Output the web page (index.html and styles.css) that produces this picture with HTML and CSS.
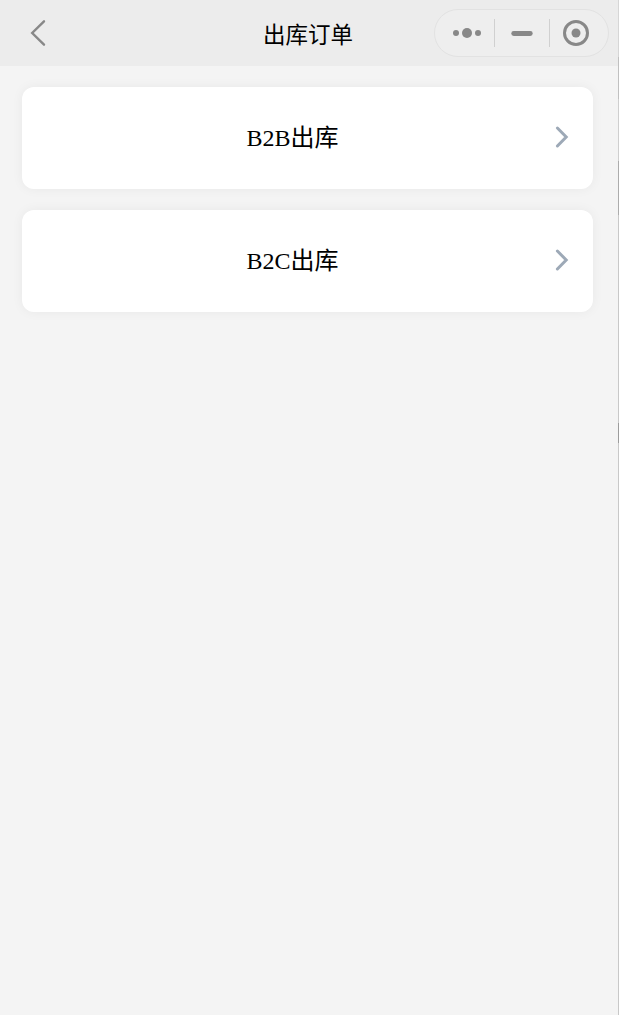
FILE: index.html
```html
<!DOCTYPE html>
<html lang="zh-CN">
<head>
    <meta charset="UTF-8">
    <meta name="viewport" content="width=device-width, initial-scale=1.0">
    <title>出库订单</title>
    <link rel="stylesheet" href="styles.css">
</head>
<body>
    <!-- Navigation bar -->
    <header class="navbar">
        <a class="back" href="#" aria-label="返回">
            <svg width="18" height="28" viewBox="0 0 18 28">
                <path d="M15 2.3 L3.2 14 L15 25.7" />
            </svg>
        </a>
        <h1 class="title">出库订单</h1>
        <div class="capsule">
            <svg class="dots" width="30" height="28" viewBox="0 0 30 28">
                <circle cx="4" cy="14" r="3" />
                <circle cx="15" cy="14" r="5" />
                <circle cx="26" cy="14" r="3" />
            </svg>
            <svg class="minimize" width="22" height="28" viewBox="0 0 22 28">
                <rect x="0.3" y="12.1" width="21.4" height="4.8" rx="2.4" />
            </svg>
            <svg class="close" width="28" height="28" viewBox="0 0 28 28">
                <circle class="ring" cx="14" cy="14" r="11.5" />
                <circle cx="14" cy="14" r="4.5" />
            </svg>
        </div>
    </header>

    <!-- Outbound order types -->
    <main class="list">
        <a class="card" href="#">
            <span class="card-label">B2B出库</span>
            <svg class="arrow" width="14" height="24" viewBox="0 0 14 24">
                <path d="M2.4 3 L11.2 12 L2.4 21" />
            </svg>
        </a>
        <a class="card" href="#">
            <span class="card-label">B2C出库</span>
            <svg class="arrow" width="14" height="24" viewBox="0 0 14 24">
                <path d="M2.4 3 L11.2 12 L2.4 21" />
            </svg>
        </a>
    </main>
</body>
</html>
```

FILE: styles.css
```css
* {
    box-sizing: border-box;
}

body {
    margin: 0;
    min-height: 100vh;
    padding-right: 1px;
    /* window edge on the right */
    background: linear-gradient(#d6d6d6 0 57px, #c0c0c0 57px 99px, #cfcfcf 99px 161px, #acacac 161px 215px, #c8c8c8 215px 423px, #9c9c9c 423px 443px, #c8c8c8 443px) right top / 1px 100% no-repeat #f4f4f4;
    color: #000;
    font-family: "Liberation Serif", "Noto Sans CJK SC", serif;
}

/* Navigation bar */
.navbar {
    display: grid;
    grid-template-columns: 175px 1fr 175px;
    align-items: center;
    height: 66px;
    padding: 0 9px 0 7px;
    background-color: #ececec;
}

.back {
    display: flex;
    padding-left: 22px;
}

.back path {
    fill: none;
    stroke: #888;
    stroke-width: 2.4;
    stroke-linecap: round;
}

.title {
    margin: 0;
    padding-bottom: 1px;
    font-family: "Noto Sans CJK SC", sans-serif;
    font-size: 22.5px;
    font-weight: 400;
    line-height: 32px;
    text-align: center;
}

/* Capsule menu */
.capsule {
    display: grid;
    grid-template-columns: 59px 55px 1fr;
    align-items: center;
    height: 48px;
    border: 1px solid #e2e2e2;
    border-radius: 24px;
    background-color: #eee;
    fill: #888;
}

.dots {
    margin-left: 17px;
}

.minimize,
.close {
    justify-self: start;
}

.minimize {
    width: 54px;
    padding: 0 15px 0 16px;
    border-left: 1px solid #d0d0d0;
}

.close {
    width: 54px;
    padding: 0 13px 0 12px;
    border-left: 1px solid #d0d0d0;
}

.ring {
    fill: none;
    stroke: #888;
    stroke-width: 3;
}

/* Order type cards */
.list {
    display: flex;
    flex-direction: column;
    gap: 21px;
    padding: 21px 25px 21px 22px;
}

.card {
    display: flex;
    align-items: center;
    height: 102px;
    padding-right: 24px;
    border-radius: 12px;
    background-color: #fff;
    box-shadow: 0 0 12px rgba(0, 0, 0, 0.05);
    color: #000;
    text-decoration: none;
}

.card-label {
    flex: 1;
    padding-left: 8px;
    font-size: 24px;
    line-height: 36px;
    text-align: center;
}

.arrow {
    margin-bottom: 2px;
}

.arrow path {
    fill: none;
    stroke: #9da9b7;
    stroke-width: 3;
    stroke-linecap: round;
}
```
